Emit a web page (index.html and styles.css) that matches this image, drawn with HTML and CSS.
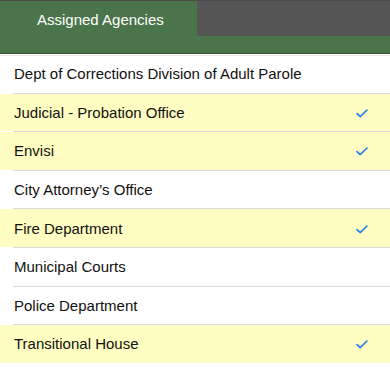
FILE: index.html
```html
<!DOCTYPE html>
<html lang="en">
<head>
  <meta charset="UTF-8" />
  <title>Assigned Agencies</title>
  <link rel="stylesheet" href="styles.css">
</head>
<body>

  <div class="header">
    <div class="tabs">
      <div class="tab active">Assigned Agencies</div>
      <div class="tab-fill"></div>
    </div>
  </div>

  <ul class="agency-list">
    <li class="agency">Dept of Corrections Division of Adult Parole</li>
    <li class="agency selected">Judicial - Probation Office<span class="check"></span></li>
    <li class="agency selected">Envisi<span class="check"></span></li>
    <li class="agency">City Attorney’s Office</li>
    <li class="agency selected">Fire Department<span class="check"></span></li>
    <li class="agency">Municipal Courts</li>
    <li class="agency">Police Department</li>
    <li class="agency selected">Transitional House<span class="check"></span></li>
  </ul>

  <script>
    document.querySelectorAll(".check").forEach(el => {
      el.innerHTML = '<svg width="12" height="9" viewBox="0 0 12 9"><path d="M1 4.6 L4.2 7.6 L11 1" fill="none" stroke="#1f7ff0" stroke-width="1.6" stroke-linecap="round" stroke-linejoin="round"/></svg>';
    });
  </script>

</body>
</html>
```

FILE: styles.css
```css
body {
  margin: 0;
  background-color: #ffffff;
  font-family: "Liberation Sans", Arial, sans-serif;
  color: #111;
}

.header {
  background-color: #4a7449;
  border-top: 1px solid #4a4a4a;
  border-bottom: 1px solid #36503a;
  height: 52px;
  box-shadow: 0 1px 0 #ffffff, 0 2px 0 #e6e6e6;
  margin-bottom: 1px;
}

.tabs {
  display: flex;
  height: 35px;
}

.tab {
  width: 197px;
  color: #ffffff;
  font-size: 15px;
  padding-left: 37px;
  box-sizing: border-box;
  line-height: 37px;
}

.tab-fill {
  flex: 1;
  background-color: #565656;
}

.agency-list {
  list-style: none;
  margin: 0;
  padding: 0;
}

.agency {
  display: flex;
  align-items: center;
  justify-content: space-between;
  height: 37.6px;
  padding: 0 22px 0 14px;
  font-size: 15px;
  position: relative;
}

.agency::after {
  content: "";
  position: absolute;
  left: 13px;
  right: 0;
  bottom: -1px;
  height: 1px;
  background-color: #dcdcdc;
}

.agency + .agency {
  margin-top: 1px;
}

.selected {
  background-color: #fffdc1;
}

.check {
  display: flex;
  margin-top: 2px;
}
```
